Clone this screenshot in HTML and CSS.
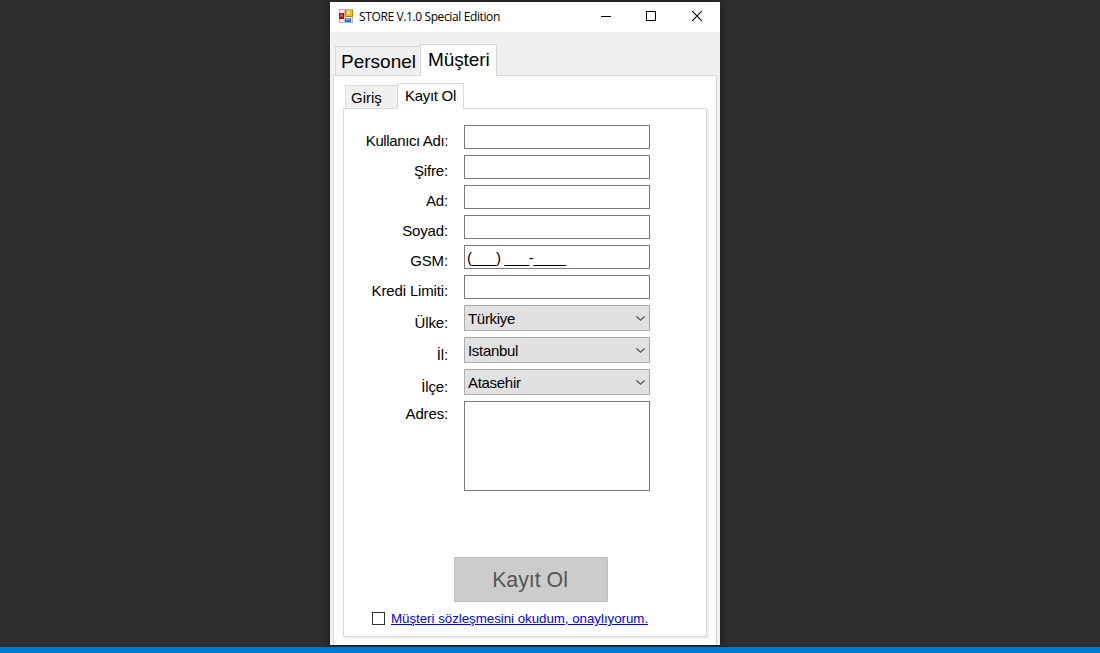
FILE: index.html
```html
<!DOCTYPE html>
<html lang="tr">
<head>
<meta charset="utf-8">
<title>STORE V.1.0 Special Edition</title>
<link rel="stylesheet" href="styles.css">
</head>
<body>
<main class="window">
  <header class="titlebar">
    <svg class="app-icon" width="14" height="14" viewBox="0 0 14 14" shape-rendering="crispEdges">
      <rect width="14" height="14" fill="#b4b4b4"/>
      <rect x="1" y="1" width="12" height="12" fill="#eeeeee"/>
      <rect x="5" y="0" width="1" height="14" fill="#c4c4c4"/>
      <rect x="0" y="4" width="5" height="6" fill="#a81408"/>
      <rect x="1" y="5" width="3" height="3" fill="#dc3a24"/>
      <rect x="2" y="6" width="1" height="1" fill="#f6a090"/>
      <rect x="6" y="1" width="8" height="7" fill="#b98208"/>
      <rect x="7" y="1" width="6" height="6" fill="#f5bd28"/>
      <rect x="8" y="2" width="3" height="3" fill="#ffe078"/>
      <rect x="6" y="9" width="6" height="4" fill="#2e6edb"/>
      <rect x="7" y="9" width="4" height="2" fill="#75aaff"/>
    </svg>
    <span class="caption">STORE V.1.0 Special Edition</span>
    <svg class="controls" width="104" height="12" viewBox="0 0 104 12" fill="none" stroke="#000">
      <path d="M1 6.5h10M46.500 1.500h9v9h-9z" shape-rendering="crispEdges"/>
      <path d="M92.200 1.200l9.600 9.600M101.800 1.200l-9.600 9.600" stroke-width="1.100"/>
    </svg>
  </header>
  <nav class="tabs tabs-main">
    <span class="tab">Personel</span>
    <span class="tab active">Müşteri</span>
  </nav>
  <section class="page">
    <nav class="tabs tabs-sub">
      <span class="tab">Giriş</span>
      <span class="tab active">Kayıt Ol</span>
    </nav>
    <form class="panel">
      <div class="row"><label class="tight">Kullanıcı Adı:</label><div class="field"></div></div>
      <div class="row"><label>Şifre:</label><div class="field"></div></div>
      <div class="row"><label>Ad:</label><div class="field"></div></div>
      <div class="row"><label>Soyad:</label><div class="field"></div></div>
      <div class="row"><label>GSM:</label><div class="field mask">(___) ___-____</div></div>
      <div class="row"><label>Kredi Limiti:</label><div class="field"></div></div>
      <div class="row pick"><label>Ülke:</label><div class="select"><span>Türkiye</span><svg width="9" height="5" viewBox="0 0 9 5"><path d="M.5.5l4 3.700 4-3.700" fill="none" stroke="#505050" stroke-width="1.100"/></svg></div></div>
      <div class="row pick"><label>İl:</label><div class="select"><span>Istanbul</span><svg width="9" height="5" viewBox="0 0 9 5"><path d="M.5.5l4 3.700 4-3.700" fill="none" stroke="#505050" stroke-width="1.100"/></svg></div></div>
      <div class="row pick"><label>İlçe:</label><div class="select"><span>Atasehir</span><svg width="9" height="5" viewBox="0 0 9 5"><path d="M.5.5l4 3.700 4-3.700" fill="none" stroke="#505050" stroke-width="1.100"/></svg></div></div>
      <div class="row address"><label>Adres:</label><div class="field"></div></div>
      <div class="submit"><span>Kayıt Ol</span></div>
      <div class="agree"><span class="box"></span><a>Müşteri sözleşmesini okudum, onaylıyorum.</a></div>
    </form>
  </section>
</main>
<footer class="statusbar"></footer>
</body>
</html>
```
FILE: styles.css
```css
* { box-sizing: border-box; }
body {
  margin: 0;
  height: 653px;
  padding-top: 2px;
  display: flex;
  flex-direction: column;
  align-items: center;
  overflow: hidden;
  background: #2d2d30;
  color: #000;
  font-family: "Liberation Sans", Arial, sans-serif;
}
.window {
  width: 390px;
  height: 643px;
  margin-left: -50px;
  flex: none;
  display: flex;
  flex-direction: column;
  background: #f0f0f0;
  overflow: hidden;
  box-shadow: 0 0 6px 1px rgba(0, 0, 0, .35);
}
.statusbar {
  width: 100%;
  height: 6px;
  margin-top: 2px;
  flex: none;
  background: #007acc;
}
.titlebar {
  height: 30px;
  flex: none;
  display: flex;
  align-items: center;
  padding: 0 16px 2px 9px;
  background: #fff;
}
.caption {
  margin-left: 6px;
  padding-top: 2px;
  font: 12px/16px "Open Sans", sans-serif;
  letter-spacing: -.38px;
  white-space: nowrap;
}
.controls { margin-left: auto; }
.tabs { display: flex; align-items: flex-end; flex: none; position: relative; }
.tab {
  border: 1px solid #d9d9d9;
  border-bottom: 0;
  background: #f0f0f0;
  white-space: nowrap;
}
.tab.active { background: #fff; }
.tabs-main { height: 43px; padding-left: 5px; }
.tabs-main .tab { width: 86px; height: 29px; padding: 4px 0 0 5px; font-size: 19px; line-height: 22px; }
.tabs-main .active { width: 77px; height: 32px; margin: 0 0 -1px -1px; padding: 4px 0 0 7px; letter-spacing: -.1px; }
.page {
  width: 384px;
  height: 575px;
  margin-left: 3px;
  flex: none;
  border: 1px solid #d9d9d9;
  background: #fff;
  padding: 0 9px;
}
.tabs-sub { height: 32px; padding-left: 2px; }
.tabs-sub .tab { width: 53px; height: 23px; padding: 3px 0 0 5px; font-size: 15px; line-height: 18px; }
.tabs-sub .active { width: 67px; height: 26px; margin: 0 0 -1px -1px; padding: 3px 0 0 7px; letter-spacing: -.3px; }
.panel {
  width: 364px;
  height: 529px;
  border: 1px solid #d9d9d9;
  box-shadow: 2px 2px 0 #f0f0f0;
  padding-top: 16px;
  font-size: 15px;
  line-height: 18px;
}
.row { display: flex; height: 30px; }
.row label {
  width: 104px;
  margin-right: 16px;
  padding-top: 7px;
  text-align: right;
  letter-spacing: -.15px;
  white-space: nowrap;
}
.row .tight { letter-spacing: -.38px; }
.field {
  width: 186px;
  height: 24px;
  border: 1px solid #7a7a7a;
  background: #fff;
  padding: 3px 0 0 2px;
}
.mask { letter-spacing: -.28px; }
.pick { height: 32px; }
.pick label { padding-top: 9px; }
.select {
  width: 186px;
  height: 26px;
  display: flex;
  align-items: center;
  justify-content: space-between;
  padding: 1px 4px 0 3px;
  border: 1px solid #adadad;
  background: #e1e1e1;
  letter-spacing: -.3px;
}
.select span { padding-top: 1px; }
.address { height: 156px; }
.address label { padding-top: 4px; }
.address .field { height: 90px; }
.submit {
  width: 154px;
  height: 45px;
  margin-left: 110px;
  display: flex;
  align-items: center;
  justify-content: center;
  padding-right: 2px;
  border: 1px solid #bfbfbf;
  background: #ccc;
  color: #555;
  font-size: 21.300px;
}
.agree { display: flex; align-items: center; margin: 8px 0 0 28px; }
.box { width: 13px; height: 13px; border: 1px solid #333; }
.agree a {
  margin-left: 6px;
  padding-top: 1px;
  color: #00f;
  text-decoration: underline;
  font-size: 13.300px;
  line-height: 16px;
  letter-spacing: -.02px;
  white-space: nowrap;
}
```
